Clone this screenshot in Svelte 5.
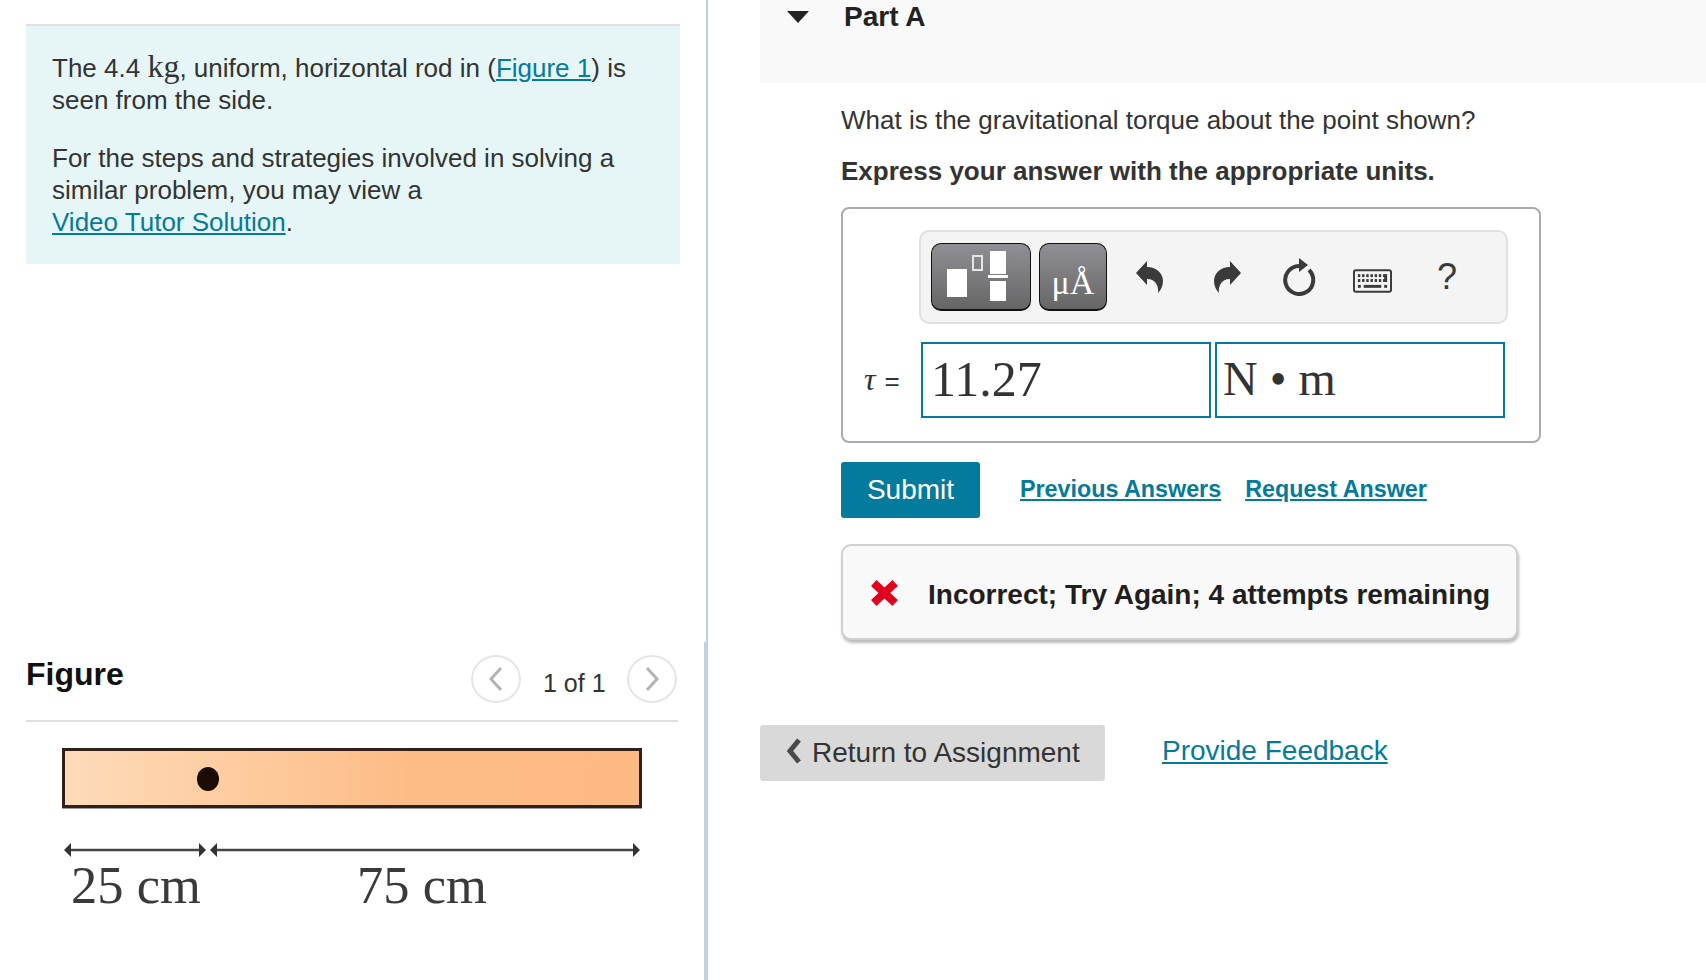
<script>
  const keys = [0,1,2,3,4,5,6];
</script>

<div class="page">
  <aside class="left">
    <section class="info">
      <p>The 4.4 <span class="unit">kg</span>, uniform, horizontal rod in (<a href="#f">Figure 1</a>) is<br />seen from the side.</p>
      <p>For the steps and strategies involved in solving a<br />similar problem, you may view a<br /><a href="#v">Video Tutor Solution</a>.</p>
    </section>
    <section class="figure">
      <header class="fighead">
        <h2>Figure</h2>
        <div class="pager">
          <button class="circle" aria-label="Previous">
            <svg width="16" height="26" viewBox="0 0 16 26"><path d="M13 2 3 13l10 11" fill="none" stroke="#b4b4b4" stroke-width="3"/></svg>
          </button>
          <span class="count">1 of 1</span>
          <button class="circle" aria-label="Next">
            <svg width="16" height="26" viewBox="0 0 16 26"><path d="M3 2l10 11L3 24" fill="none" stroke="#b4b4b4" stroke-width="3"/></svg>
          </button>
        </div>
      </header>
      <svg class="diagram" width="640" height="190" viewBox="0 0 640 190">
        <defs>
          <linearGradient id="rod" x1="0" x2="1" y1="0" y2="0">
            <stop offset="0" stop-color="#fedbb9"/>
            <stop offset="0.6" stop-color="#fdbc86"/>
            <stop offset="1" stop-color="#fdb982"/>
          </linearGradient>
        </defs>
        <rect x="37.500" y="9.500" width="577" height="57" fill="url(#rod)" stroke="#2f2118" stroke-width="3"/>
        <line x1="36" x2="616" y1="68.500" y2="68.500" stroke="#999" stroke-width="1"/>
        <ellipse cx="182" cy="39" rx="11" ry="12" fill="#1a0b04"/>
        <g stroke="#444" stroke-width="2.500">
          <line x1="40" x2="176" y1="110" y2="110"/>
          <line x1="188" x2="612" y1="110" y2="110"/>
        </g>
        <g fill="#333">
          <path d="M38 110l7-7v14z"/>
          <path d="M180 110l-7-7v14z"/>
          <path d="M184 110l7-7v14z"/>
          <path d="M614 110l-7-7v14z"/>
        </g>
        <text x="45" y="163" class="dim">25 cm</text>
        <text x="331" y="163" class="dim">75 cm</text>
      </svg>
    </section>
  </aside>

  <main class="right">
    <header class="part">
      <svg class="tri" width="22" height="12" viewBox="0 0 22 12"><path d="M0 0h22L11 12z" fill="#222"/></svg>
      <h1>Part A</h1>
    </header>
    <div class="body">
      <p class="q">What is the gravitational torque about the point shown?</p>
      <p class="ex">Express your answer with the appropriate units.</p>

      <div class="answer">
        <div class="toolbar">
          <div class="tool wide">
            <svg width="100" height="68" viewBox="0 0 100 68">
              <rect x="16" y="26" width="20" height="28" fill="#fff"/>
              <rect x="42" y="13" width="9" height="14" fill="none" stroke="#e6e6e6" stroke-width="2"/>
              <rect x="59" y="8" width="16" height="23" fill="#fff"/>
              <rect x="57" y="32" width="20" height="3" fill="#fff"/>
              <rect x="59" y="38" width="16" height="20" fill="#fff"/>
            </svg>
          </div>
          <div class="tool unitbtn"><span class="mu">μÅ</span></div>
          <div class="icons">
            <svg class="ic" width="28" height="32" viewBox="0 0 28 32"><path d="M0 12 11 0v6c9 0 16 6 16 14 0 5-2 9-5 12 1-6-2-14-11-14v6z" fill="#3a3a3a"/></svg>
            <svg class="ic" width="28" height="32" viewBox="0 0 28 32"><path d="M28 12 17 0v6C8 6 1 12 1 20c0 5 2 9 5 12-1-6 2-14 11-14v6z" fill="#3a3a3a"/></svg>
            <svg class="ic" width="34" height="38" viewBox="0 0 34 38"><path d="M17 8A14 14 0 1 0 27 12" fill="none" stroke="#3a3a3a" stroke-width="4"/><path d="M17 0l9 7-9 7z" fill="#3a3a3a"/></svg>
            <svg class="ic kb" width="39" height="24" viewBox="0 0 40 24">
              <rect x="1" y="1" width="38" height="22" rx="2" fill="#f4f4f4" stroke="#3a3a3a" stroke-width="2"/>
              {#each keys as k}
                <rect x={5 + k * 4.300} y="5" width="2.500" height="3" fill="#3a3a3a"/>
              {/each}
              {#each keys as k}
                <rect x={5 + k * 4.300} y="10" width="2.500" height="3" fill="#3a3a3a"/>
              {/each}
              <rect x="32" y="5" width="3" height="8" fill="#3a3a3a"/>
              <rect x="5" y="16" width="3" height="3" fill="#3a3a3a"/>
              <rect x="11" y="16" width="18" height="3" fill="#3a3a3a"/>
              <rect x="32" y="16" width="3" height="3" fill="#3a3a3a"/>
            </svg>
            <span class="help">?</span>
          </div>
        </div>
        <div class="inputs">
          <span class="label"><i>τ</i>=</span>
          <div class="field">11.27</div>
          <div class="field second">N • m</div>
        </div>
      </div>

      <div class="actions">
        <button class="submit">Submit</button>
        <a class="small" href="#p">Previous Answers</a>
        <a class="small" href="#r">Request Answer</a>
      </div>

      <div class="feedback">
        <svg width="30" height="28" viewBox="0 0 30 28"><path d="M7.700 6.700 23.300 21.300M23.300 6.700 7.700 21.300" fill="none" stroke="#e2001f" stroke-width="8" stroke-linecap="square"/></svg>
        <span>Incorrect; Try Again; 4 attempts remaining</span>
      </div>
    </div>

    <footer class="foot">
      <button class="back">
        <svg width="16" height="26" viewBox="0 0 16 26"><path d="M13 2 4 13l9 11" fill="none" stroke="#4a4a4a" stroke-width="5"/></svg>
        Return to Assignment
      </button>
      <a href="#pf">Provide Feedback</a>
    </footer>
  </main>
</div>

<style>
  :global(body) {
    margin: 0;
    background: #fff;
    color: #333;
    font-family: "Liberation Sans", Arial, sans-serif;
    font-size: 26px;
    line-height: 32px;
    overflow: hidden;
  }
  a { color: #047b9c; text-decoration: underline; }
  p, h1, h2 { margin: 0; }
  button { font-family: inherit; border: 0; padding: 0; }

  .page { display: flex; height: 980px; overflow: hidden; }

  .left {
    width: 708px;
    flex: none;
    box-sizing: border-box;
    padding: 24px 0 0 26px;
    background: linear-gradient(#bfd0e2, #bfd0e2) right top / 2px 642px no-repeat,
      linear-gradient(#bfd0e2, #bfd0e2) right bottom / 4px 338px no-repeat;
  }
  .info {
    width: 654px;
    height: 240px;
    box-sizing: border-box;
    background: #e6f6f7;
    border-top: 2px solid #e0e0e0;
    padding: 24px 26px 0;
  }
  .info p + p { margin-top: 26px; }
  .unit { font-family: "Liberation Serif", serif; font-size: 32px; line-height: 1; }

  .figure { margin-top: 391px; width: 652px; }
  .fighead {
    display: flex;
    justify-content: space-between;
    align-items: flex-start;
    height: 65px;
    border-bottom: 2px solid #e0e0e0;
  }
  h2 { font-size: 32px; line-height: 38px; color: #111; font-weight: 700; }
  .pager { display: flex; align-items: center; margin-right: 1px; gap: 22px; }
  .circle {
    width: 50px;
    height: 48px;
    flex: none;
    box-sizing: border-box;
    border: 2px solid #e5e5e5;
    border-radius: 50%;
    background: #fff;
    display: flex;
    align-items: center;
    justify-content: center;
  }
  .count { padding-top: 8px; width: 62px; font-size: 25px; white-space: nowrap; }
  .diagram { display: block; margin-top: 18px; filter: blur(0.6px); }
  .dim { font-family: "Liberation Serif", serif; font-size: 52.500px; fill: #3a3a3a; }

  .right { flex: 1; min-width: 0; padding-left: 52px; }
  .part {
    height: 83px;
    background: #f9f9f9;
    display: flex;
    align-items: flex-start;
  }
  .tri { margin: 11px 0 0 27px; }
  h1 { font-size: 28px; line-height: 32px; font-weight: 700; color: #222; margin: 1px 0 0 35px; }

  .body { padding: 21px 0 0 81px; }
  .q { line-height: 32px; }
  .ex { font-weight: 700; margin-top: 19px; line-height: 32px; }

  .answer {
    width: 700px;
    height: 236px;
    box-sizing: border-box;
    border: 2px solid #aaa;
    border-radius: 8px;
    margin-top: 20px;
    padding: 21px 0 0 76px;
  }
  .toolbar {
    width: 589px;
    height: 94px;
    box-sizing: border-box;
    background: #f4f4f4;
    border: 2px solid #e0e0e0;
    border-radius: 10px;
    display: flex;
    align-items: center;
    padding-left: 10px;
    gap: 8px;
  }
  .tool {
    height: 68px;
    box-sizing: border-box;
    background: linear-gradient(#908f95, #666);
    border: 1px solid #111;
    border-bottom-width: 2px;
    border-radius: 10px;
    display: flex;
    align-items: center;
    justify-content: center;
    overflow: hidden;
    flex: none;
  }
  .tool svg { flex: none; }
  .wide { width: 100px; }
  .unitbtn { width: 68px; }
  .mu { font-family: "Liberation Serif", serif; font-size: 34px; color: #fff; line-height: 1; padding-top: 12px; }
  .icons { position: relative; flex: 1; height: 68px; }
  .ic { position: absolute; }
  .ic:nth-child(1) { left: 21px; top: 18px; }
  .ic:nth-child(2) { left: 98px; top: 18px; }
  .ic:nth-child(3) { left: 167px; top: 15px; }
  .kb { left: 238px; top: 26px; }
  .help { position: absolute; left: 322px; top: 16px; font-size: 36px; line-height: 36px; color: #3a3a3a; }

  .inputs { display: flex; align-items: center; margin-top: 18px; margin-left: -55px; }
  .label { width: 57px; flex: none; font-size: 26px; color: #333; }
  .label i { font-family: "Liberation Serif", serif; font-size: 32px; margin-right: 9px; }
  .field {
    width: 290px;
    height: 76px;
    box-sizing: border-box;
    border: 2px solid #047b9c;
    font-family: "Liberation Serif", serif;
    font-size: 50px;
    line-height: 70px;
    padding-left: 8px;
    color: #333;
  }
  .second { margin-left: 4px; padding-left: 6px; font-size: 48px; }

  .actions { display: flex; align-items: center; margin-top: 19px; }
  .submit {
    width: 139px;
    height: 56px;
    background: #047b9c;
    color: #fff;
    border-radius: 3px;
    font-size: 28px;
  }
  .small { font-weight: 700; font-size: 23.300px; margin: 0 0 2px 24px; }
  .submit + .small { margin-left: 40px; }

  .feedback {
    width: 677px;
    height: 96px;
    box-sizing: border-box;
    margin-top: 26px;
    background: #f9f9f9;
    border: 2px solid #d0d0d0;
    border-radius: 10px;
    box-shadow: 1px 3px 3px #bbb;
    display: flex;
    align-items: center;
    padding: 5px 0 0 26px;
    gap: 29px;
    font-weight: 700;
    font-size: 28px;
    color: #1f1f1f;
  }
  .feedback svg { margin-top: -3px; }

  .foot { display: flex; align-items: flex-start; margin-top: 85px; }
  .back {
    width: 345px;
    height: 56px;
    background: #d9d9d9;
    border-radius: 3px;
    color: #333;
    font-size: 28px;
    display: flex;
    align-items: center;
    padding-left: 26px;
    gap: 10px;
    box-sizing: border-box;
  }
  .back svg { margin-top: -4px; }
  .foot a { margin-left: 57px; margin-top: 10px; font-size: 28px; }
</style>
